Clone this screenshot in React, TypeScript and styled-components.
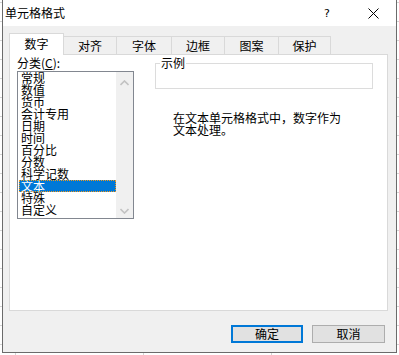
import React from "react";
import styled, { createGlobalStyle } from "styled-components";

const GlobalStyle = createGlobalStyle`
  html, body {
    margin: 0;
    padding: 0;
  }
  body {
    font-family: "Noto Sans CJK SC", "Noto Sans", sans-serif;
    font-size: 12px;
    color: #000;
  }
`;

const categories = [
  "常规",
  "数值",
  "货币",
  "会计专用",
  "日期",
  "时间",
  "百分比",
  "分数",
  "科学记数",
  "文本",
  "特殊",
  "自定义",
];

const tabs = [
  { label: "数字", width: 55 },
  { label: "对齐", width: 54 },
  { label: "字体", width: 56 },
  { label: "边框", width: 54 },
  { label: "图案", width: 55 },
  { label: "保护", width: 53 },
];

const App = () => {
  const selected = "文本";

  return (
    <Page>
      <GlobalStyle />
      <Dialog>
        <TitleBar>
          <Title>单元格格式</Title>
          <CaptionButton>
            <HelpMark>?</HelpMark>
          </CaptionButton>
          <CaptionButton>
            <svg width="11" height="11" viewBox="0 0 11 11">
              <path d="M0.5 0.5 L10.5 10.5 M10.5 0.5 L0.5 10.5" stroke="#000" strokeWidth="1" fill="none" />
            </svg>
          </CaptionButton>
        </TitleBar>

        <Body>
          <TabRow>
            {tabs.map((t, i) => (
              <Tab key={t.label} $active={i === 0} $width={t.width}>
                {t.label}
              </Tab>
            ))}
          </TabRow>

          <Panel>
            <LeftCol>
              <FieldLabel>
                分类(<u>C</u>):
              </FieldLabel>
              <ListBox>
                <Items>
                  {categories.map((c) => (
                    <Item key={c} $selected={c === selected}>
                      {c}
                    </Item>
                  ))}
                </Items>
                <ScrollBar>
                  <svg width="9" height="6" viewBox="0 0 9 6">
                    <path d="M0.5 5 L4.5 1 L8.5 5" stroke="#c2c2c2" strokeWidth="1.6" fill="none" />
                  </svg>
                  <svg width="9" height="6" viewBox="0 0 9 6">
                    <path d="M0.5 1 L4.5 5 L8.5 1" stroke="#c2c2c2" strokeWidth="1.6" fill="none" />
                  </svg>
                </ScrollBar>
              </ListBox>
            </LeftCol>

            <RightCol>
              <GroupBox>
                <GroupLabel>示例</GroupLabel>
              </GroupBox>
              <Description>
                在文本单元格格式中，数字作为
                <br />
                文本处理。
              </Description>
            </RightCol>
          </Panel>

          <ButtonRow>
            <Button $primary>确定</Button>
            <Button>取消</Button>
          </ButtonRow>
        </Body>
      </Dialog>
    </Page>
  );
};

export default App;

const Page = styled.div`
  width: 399px;
  height: 355px;
  padding-left: 2px;
  box-sizing: border-box;
  background-color: #ffffff;
  background-image: linear-gradient(#d4d4d4 1px, transparent 1px),
    linear-gradient(90deg, #d4d4d4 1px, transparent 1px);
  background-size: 100% 19px, 128px 100%;
  background-position: 0 2px, 15px 0;
  overflow: hidden;
`;

const Dialog = styled.div`
  width: 395px;
  height: 353px;
  box-sizing: border-box;
  border: 1px solid #6b6b6b;
  border-top: none;
  background: #f0f0f0;
  display: flex;
  flex-direction: column;
`;

const TitleBar = styled.div`
  height: 26px;
  background: #ffffff;
  display: flex;
  align-items: center;
`;

const Title = styled.div`
  flex: 1;
  padding-left: 2px;
  font-size: 12px;
  line-height: 14px;
`;

const CaptionButton = styled.div`
  width: 46px;
  height: 26px;
  display: flex;
  align-items: center;
  justify-content: center;
`;

const HelpMark = styled.span`
  font-family: "DejaVu Sans", sans-serif;
  font-size: 11px;
  line-height: 11px;
`;

const Body = styled.div`
  flex: 1;
  display: flex;
  flex-direction: column;
  padding: 7px 8px 0 6px;
`;

const TabRow = styled.div`
  display: flex;
  align-items: flex-start;
  height: 22px;
  margin-bottom: -1px;
  position: relative;
  z-index: 1;
`;

const Tab = styled.div<{ $active?: boolean; $width: number }>`
  width: ${(p) => p.$width}px;
  height: ${(p) => (p.$active ? 22 : 18)}px;
  margin-top: ${(p) => (p.$active ? 0 : 3)}px;
  margin-left: -1px;
  &:first-child {
    margin-left: 0;
  }
  box-sizing: border-box;
  border: 1px solid #d9d9d9;
  border-bottom: none;
  background: ${(p) => (p.$active ? "#ffffff" : "#f0f0f0")};
  display: flex;
  align-items: center;
  justify-content: center;
  font-size: 12px;
  line-height: 12px;
  padding-bottom: ${(p) => (p.$active ? 1 : 0)}px;
`;

const Panel = styled.div`
  height: 257px;
  box-sizing: border-box;
  border: 1px solid #d9d9d9;
  background: #ffffff;
  display: flex;
  padding: 1px 0 0 7px;
`;

const LeftCol = styled.div`
  width: 117px;
  display: flex;
  flex-direction: column;
`;

const FieldLabel = styled.div`
  height: 15px;
  line-height: 14px;
  font-size: 12px;
  white-space: nowrap;
`;

const ListBox = styled.div`
  height: 148px;
  box-sizing: border-box;
  border: 1px solid #828790;
  display: flex;
`;

const Items = styled.div`
  flex: 1;
  padding-left: 1px;
`;

const Item = styled.div<{ $selected?: boolean }>`
  height: 12px;
  line-height: 12px;
  font-size: 12px;
  padding-left: 2px;
  white-space: nowrap;
  background: ${(p) => (p.$selected ? "#0078d7" : "transparent")};
  color: ${(p) => (p.$selected ? "#ffffff" : "#000000")};
  outline: ${(p) => (p.$selected ? "1px dotted #f39a1d" : "none")};
  outline-offset: -1px;
`;

const ScrollBar = styled.div`
  width: 17px;
  background: #f0f0f0;
  display: flex;
  flex-direction: column;
  justify-content: space-between;
  align-items: center;
  padding: 8px 0 4px;
  box-sizing: border-box;
`;

const RightCol = styled.div`
  width: 218px;
  margin-left: 21px;
  display: flex;
  flex-direction: column;
`;

const GroupBox = styled.div`
  position: relative;
  margin-top: 7px;
  height: 26px;
  box-sizing: border-box;
  border: 1px solid #dcdcdc;
`;

const GroupLabel = styled.span`
  position: absolute;
  top: -7px;
  left: 4px;
  padding: 0 1px;
  background: #ffffff;
  font-size: 12px;
  line-height: 12px;
`;

const Description = styled.div`
  margin-top: 23px;
  padding-left: 18px;
  font-size: 12px;
  line-height: 12px;
`;

const ButtonRow = styled.div`
  display: flex;
  justify-content: flex-end;
  gap: 9px;
  margin-top: 14px;
  padding-right: 3px;
`;

const Button = styled.div<{ $primary?: boolean }>`
  width: ${(p) => (p.$primary ? 72 : 73)}px;
  height: 18px;
  box-sizing: border-box;
  border: ${(p) => (p.$primary ? "2px solid #0078d7" : "1px solid #adadad")};
  background: #e1e1e1;
  display: flex;
  align-items: center;
  justify-content: center;
  font-size: 12px;
  line-height: 12px;
`;
